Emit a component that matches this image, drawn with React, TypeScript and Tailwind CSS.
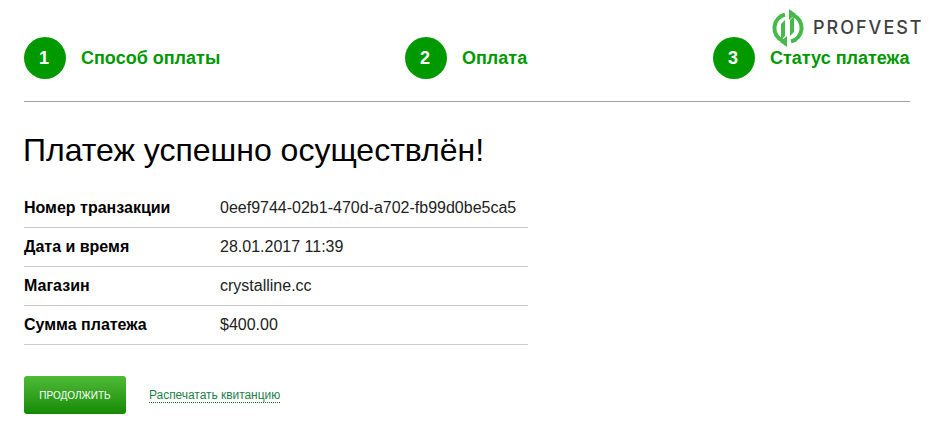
const steps = [
  { num: 1, label: 'Способ оплаты', width: 'w-[381px]' },
  { num: 2, label: 'Оплата', width: 'w-[308px]' },
  { num: 3, label: 'Статус платежа', width: '' },
]

const rows = [
  { label: 'Номер транзакции', value: '0eef9744-02b1-470d-a702-fb99d0be5ca5' },
  { label: 'Дата и время', value: '28.01.2017 11:39' },
  { label: 'Магазин', value: 'crystalline.cc' },
  { label: 'Сумма платежа', value: '$400.00' },
]

function Logo() {
  return (
    <div className="absolute left-[772px] top-[9px] flex items-center gap-[9px]">
      <svg width="32" height="38" viewBox="0 0 32 38" fill="none">
        <path d="M13 5.5 A14 14 0 0 0 11 32" stroke="#47b94b" strokeWidth="4" />
        <path d="M19 32.5 A14 14 0 0 0 21 6" stroke="#47b94b" strokeWidth="4" />
        <path d="M9 31 V15 L13 11 V27 Z" fill="#47b94b" />
        <path d="M18 27 V11 L22 7 V23 Z" fill="#47b94b" />
        <path d="M17 0 L24 5 L17 11 Z" fill="#47b94b" />
        <path d="M15 38 L8 33 L15 27 Z" fill="#47b94b" />
      </svg>
      <span className="font-['Inter',sans-serif] text-[18px] leading-none font-medium tracking-[2px] text-[#3f3f3f]">
        PROFVEST
      </span>
    </div>
  )
}

export default function App() {
  return (
    <div className="relative h-[440px] w-[932px] overflow-hidden bg-white pt-[37px] pr-[22px] pl-6 font-['Liberation_Sans',Arial,sans-serif] text-black">
      <Logo />

      <div className="flex h-[65px] items-start border-b border-[#a3a3a3]">
        {steps.map((step) => (
          <div key={step.num} className={`flex items-center gap-[15px] ${step.width}`}>
            <div className="flex h-[42px] w-[42px] items-center justify-center rounded-full bg-[#009900] pr-[2px] text-[18px] font-bold text-white">
              {step.num}
            </div>
            <span className="text-[18px] font-bold text-[#009900]">{step.label}</span>
          </div>
        ))}
      </div>

      <h1 className="mt-[26px] -ml-px text-[32px] leading-[44px] font-normal">Платеж успешно осуществлён!</h1>

      <div className="mt-[17px] w-[504px]">
        {rows.map((row) => (
          <div key={row.label} className="flex h-[39px] items-center border-b border-[#cccccc]">
            <span className="w-[197px] text-[16px] font-bold">{row.label}</span>
            <span className="-ml-px text-[16px] text-[#222222]">{row.value}</span>
          </div>
        ))}
      </div>

      <div className="mt-[31px] flex items-center gap-[23px]">
        <button className="h-[38px] w-[102px] rounded-[3px] bg-gradient-to-b from-[#4dbb35] to-[#128a00] text-[10px] text-white">
          ПРОДОЛЖИТЬ
        </button>
        <a className="border-b border-dotted border-[#0a7d20] text-[12px] leading-[14px] tracking-[-0.05px] text-[#1f7f4a]">
          Распечатать квитанцию
        </a>
      </div>
    </div>
  )
}
